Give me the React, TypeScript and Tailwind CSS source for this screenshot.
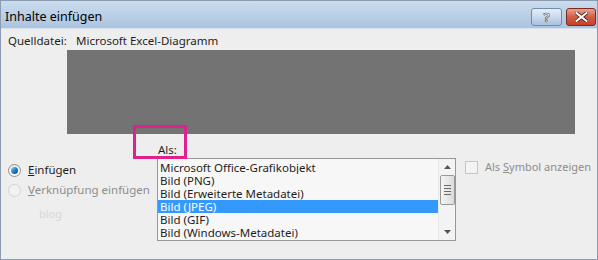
import React from 'react';

const items = [
  'Microsoft Office-Grafikobjekt',
  'Bild (PNG)',
  'Bild (Erweiterte Metadatei)',
  'Bild (JPEG)',
  'Bild (GIF)',
  'Bild (Windows-Metadatei)',
];

const Radio: React.FC<{ checked?: boolean; disabled?: boolean }> = ({ checked, disabled }) => (
  <span
    className={`shrink-0 w-[13px] h-[13px] rounded-full border flex items-center justify-center ${
      disabled ? 'border-[#d5d5d5] bg-[#f2f2f2]' : 'border-[#8e8f8f] bg-gradient-to-b from-[#e9e9e9] to-[#ffffff]'
    }`}
  >
    {checked && (
      <span className="w-[7px] h-[7px] rounded-full bg-gradient-to-br from-[#8fd1f5] via-[#1c86c9] to-[#0b3f70]" />
    )}
  </span>
);

const ScrollBar: React.FC = () => (
  <div className="w-[17px] h-full bg-[#f3f3f3] border-l border-[#e8e8e8] flex flex-col items-center">
    <div className="h-[16px] flex items-center justify-center">
      <svg width="7" height="4" viewBox="0 0 7 4">
        <path d="M0 4 L3.5 0 L7 4 Z" fill="#555" />
      </svg>
    </div>
    <div className="w-[15px] h-[30px] rounded-[2px] border border-[#9a9a9a] bg-gradient-to-r from-[#f4f4f4] to-[#dcdcdc] flex flex-col items-center justify-center gap-[2px]">
      <span className="w-[7px] h-px bg-[#6a6a6a]" />
      <span className="w-[7px] h-px bg-[#6a6a6a]" />
      <span className="w-[7px] h-px bg-[#6a6a6a]" />
      <span className="w-[7px] h-px bg-[#6a6a6a]" />
    </div>
    <div className="flex-1" />
    <div className="h-[16px] flex items-center justify-center">
      <svg width="7" height="4" viewBox="0 0 7 4">
        <path d="M0 0 L7 0 L3.5 4 Z" fill="#555" />
      </svg>
    </div>
  </div>
);

export default function App() {
  return (
    <div
      className="relative w-[598px] h-[260px] bg-[#eeeeee] border border-[#8c9cb0] text-[11.5px] text-[#1e1e1e] overflow-hidden whitespace-nowrap"
      style={{ fontFamily: '"Noto Sans", "Open Sans", sans-serif' }}
    >
      {/* title bar */}
      <div className="h-[28px] flex items-start justify-between bg-gradient-to-b from-[#cbdcee] to-[#abc4df] border-b border-[#d7e2ee] pl-[4px] pr-[1px]">
        <span className="text-[12.5px] text-black leading-none mt-[10px]">Inhalte einfügen</span>
        <div className="flex items-center gap-[4px] mt-[7px]">
          <div className="w-[31px] h-[18px] rounded-[3px] border border-[#6f8cb0] bg-gradient-to-b from-[#e5eef8] via-[#c8daee] to-[#a9c2df] flex items-center justify-center">
            <span className="text-[13px] font-bold text-white leading-none" style={{ WebkitTextStroke: '0.6px #3b4c63' }}>?</span>
          </div>
          <div className="w-[30px] h-[18px] rounded-[3px] border border-[#7a2b1e] bg-gradient-to-b from-[#e9a18f] via-[#d05d44] to-[#c2432a] flex items-center justify-center">
            <svg width="13" height="10" viewBox="0 0 13 10">
              <path d="M1.5 1 L11.5 9 M11.5 1 L1.5 9" stroke="#4a1b12" strokeWidth="3.6" strokeLinecap="square" />
              <path d="M1.5 1 L11.5 9 M11.5 1 L1.5 9" stroke="#ffffff" strokeWidth="2" strokeLinecap="square" />
            </svg>
          </div>
        </div>
      </div>

      {/* source */}
      <div className="flex items-end h-[21px] pl-[7px] pb-[1px]">
        <span className="w-[68px]">Quelldatei:</span>
        <span>Microsoft Excel-Diagramm</span>
      </div>

      <div className="ml-[66px] w-[508px] h-[84px] bg-[#737373]" />

      {/* lower section */}
      <div className="flex">
        <div className="shrink-0 w-[156px] flex flex-col pl-[7px] pt-[28px]">
          <div className="flex items-center gap-[7px] h-[16px]">
            <Radio checked />
            <span>
              <span className="underline">E</span>infügen
            </span>
          </div>
          <div className="flex items-center gap-[7px] h-[16px] mt-[4px] text-[#8d8d8d]">
            <Radio disabled />
            <span>
              <span className="underline">V</span>erknüpfung einfügen
            </span>
          </div>
          <div className="pl-[31px] mt-[8px] text-[11px] text-[#d8d8d8]">blog</div>
        </div>

        <div className="shrink-0 flex flex-col">
          <div className="h-[24px] flex items-end pl-[1px] pb-[3px] leading-none">Als:</div>
          <div className="w-[299px] h-[83px] border border-[#979797] bg-[#f7f7f7] flex">
            <div className="flex-1 flex flex-col pt-[2px]">
              {items.map((it, i) => (
                <div
                  key={it}
                  className={`h-[13px] leading-[13px] pl-[2px] overflow-hidden ${i === 3 ? 'bg-[#3399ff] text-white' : ''}`}
                >
                  {it}
                </div>
              ))}
            </div>
            <ScrollBar />
          </div>
        </div>

        <div className="shrink-0 flex items-center gap-[7px] ml-[9px] mt-[26px] h-[15px] text-[11px] text-[#8d8d8d]">
          <span className="w-[13px] h-[13px] border border-[#c5c5c5] bg-[#f4f4f4]" />
          <span>
            Als <span className="underline">S</span>ymbol anzeigen
          </span>
        </div>
      </div>

      {/* highlight frame */}
      <div className="absolute left-[132px] top-[124px] w-[54px] h-[34px] border-[3px] border-[#e0208c]" />
    </div>
  );
}
